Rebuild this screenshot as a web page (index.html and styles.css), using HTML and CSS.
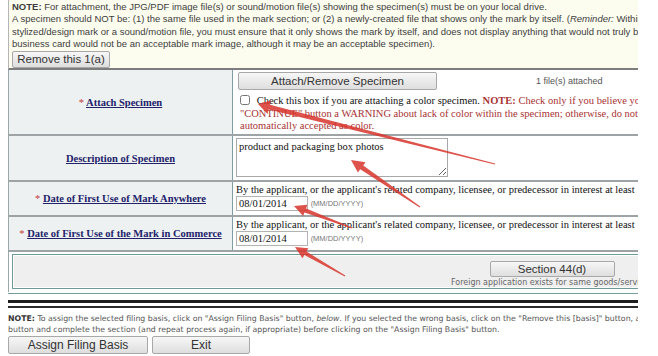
FILE: index.html
```html
<!DOCTYPE html>
<html lang="en">
<head>
    <meta charset="UTF-8">
    <title>Specimen - Filing Basis</title>
    <link rel="stylesheet" href="styles.css">
</head>
<body>
    <div class="frame">
        <div class="sheet">
            <div class="note">
                <p><b>NOTE:</b> For attachment, the JPG/PDF image file(s) or sound/motion file(s) showing the specimen(s) must be on your local drive.<br>
                A specimen should NOT be: (1) the same file used in the mark section; or (2) a newly-created file that shows only the mark by itself. (<i>Reminder:</i> Within the<br>
                stylized/design mark or a sound/motion file, you must ensure that it only shows the mark by itself, and does not display anything that would not truly be part of<br>
                business card would not be an acceptable mark image, although it may be an acceptable specimen).</p>
                <button class="btn btn-remove">Remove this 1(a)</button>
            </div>

            <table class="form">
                <tr class="row-attach">
                    <td class="label"><span class="req">*</span> <a href="#">Attach Specimen</a></td>
                    <td class="field">
                        <div class="attach-line">
                            <button class="btn btn-attach">Attach/Remove Specimen</button>
                            <span class="attached">1 file(s) attached</span>
                        </div>
                        <p class="color-check"><input type="checkbox"> Check this box if you are attaching a color specimen. <b class="warn">NOTE:</b> <span class="warn">Check only if you believe you<br>
                        "CONTINUE" button a WARNING about lack of color within the specimen; otherwise, do not<br>
                        automatically accepted as color.</span></p>
                    </td>
                </tr>
                <tr class="row-desc">
                    <td class="label"><a href="#">Description of Specimen</a></td>
                    <td class="field">
                        <textarea class="desc">product and packaging box photos</textarea>
                    </td>
                </tr>
                <tr class="row-date">
                    <td class="label"><span class="req">*</span> <a href="#">Date of First Use of Mark Anywhere</a></td>
                    <td class="field">
                        <p class="by">By the applicant, or the applicant's related company, licensee, or predecessor in interest at least</p>
                        <input class="date" type="text" value="08/01/2014"> <span class="fmt">(MM/DD/YYYY)</span>
                    </td>
                </tr>
                <tr class="row-date">
                    <td class="label"><span class="req">*</span> <a href="#">Date of First Use of the Mark in Commerce</a></td>
                    <td class="field">
                        <p class="by">By the applicant, or the applicant's related company, licensee, or predecessor in interest at least</p>
                        <input class="date" type="text" value="08/01/2014"> <span class="fmt">(MM/DD/YYYY)</span>
                    </td>
                </tr>
                <tr class="row-basis">
                    <td colspan="2">
                        <div class="basis">
                            <div class="basis-item">
                                <button class="btn btn-section">Section 44(d)</button>
                                <span class="basis-hint">Foreign application exists for same goods/services</span>
                            </div>
                        </div>
                    </td>
                </tr>
            </table>

            <div class="rule-thin"></div>
            <div class="rule-thick"></div>
            <div class="rule-dark"></div>

            <p class="foot-note"><b>NOTE:</b> To assign the selected filing basis, click on "Assign Filing Basis" button, <i>below</i>. If you selected the wrong basis, click on the "Remove this [basis]" button, after<br>
            button and complete the section (and repeat process again, if appropriate) before clicking on the "Assign Filing Basis" button.</p>

            <div class="actions">
                <button class="btn btn-assign">Assign Filing Basis</button>
                <button class="btn btn-exit">Exit</button>
            </div>
        </div>
    </div>

    <!-- red marker arrows drawn over the form -->
    <svg class="marks" width="658" height="356" viewBox="0 0 658 356">
        <g fill="#d8352c" opacity="0.85">
            <polygon points="258,104 271,100.5 270,104.8 495.1,163.5 494.9,164.5 268.6,109.6 267.6,114"/>
            <polygon points="351,160 365.5,162.3 363.2,165.6 420.3,206.5 419.7,207.5 360.2,169.3 357.9,172.5"/>
            <polygon points="294,206 307.4,204.8 306.1,208.4 352.2,227.4 351.8,228.6 304.5,212.4 303.1,216"/>
            <polygon points="295,247 308.4,248.2 306.4,251.5 345.3,275.5 344.7,276.5 304.4,255 302.4,258.3"/>
        </g>
    </svg>
</body>
</html>
```

FILE: styles.css
```css
body {
    margin: 0;
    background: #ffffff;
    font-family: "Liberation Serif", serif;
    font-size: 10.5px;
    color: #111;
}

.frame {
    width: 630px;
    margin-left: 8px;
    overflow: hidden;
}

.sheet {
    width: 760px;
}

/* top yellow note */
.note {
    background: #fcfcef;
    border-left: 1px solid #b5b5b5;
    border-bottom: 2px solid #7d7d7d;
    padding: 1px 4px 2px 3px;
    height: 65px;
    box-sizing: content-box;
    font-family: "Liberation Sans", sans-serif;
    color: #3d3d3d;
}

.note p {
    margin: 0;
    font-size: 9.5px;
    line-height: 12.3px;
    white-space: nowrap;
}

.btn {
    font-family: "Liberation Sans", sans-serif;
    font-size: 11.5px;
    color: #333;
    background: linear-gradient(#f7f7f7, #dedede);
    border: 1px solid #a8a8a8;
    border-radius: 2px;
    padding: 0;
    height: 17px;
    line-height: 15px;
}

.btn-remove {
    margin-top: 1px;
    width: 98px;
}

/* form table */
.form {
    border-collapse: collapse;
    width: 760px;
    border-left: 1px solid #9aa8aa;
}

.form td {
    padding: 0;
    vertical-align: top;
    border-bottom: 2px solid #9ea4a6;
}

.form td.label {
    width: 223px;
    background: #eef1f1;
    border-right: 1px solid #7f9ea3;
    text-align: center;
    vertical-align: middle;
    font-weight: bold;
}

.label a {
    color: #22226b;
}

.req {
    color: #c23b3b;
    font-weight: normal;
}

.field {
    padding-left: 3px !important;
}

.row-attach td {
    height: 64px;
}

.attach-line {
    display: flex;
    align-items: center;
    margin-top: 2px;
}

.btn-attach {
    width: 199px;
    height: 18px;
    margin-left: 2px;
}

.attached {
    margin-left: 99px;
    font-family: "Liberation Sans", sans-serif;
    font-size: 9px;
    color: #555;
}

.color-check {
    margin: 5px 0 0 4px;
    line-height: 12.5px;
    white-space: nowrap;
}

.color-check input {
    width: 10px;
    height: 10px;
    margin: 0 4px 0 0;
    vertical-align: -1px;
}

.warn {
    color: #a83232;
}

.row-desc td {
    height: 44px;
}

.desc {
    display: block;
    margin: 2px 0 0 0;
    width: 212px;
    height: 39px;
    box-sizing: border-box;
    border: 1px solid #a9a9a9;
    padding: 2px 2px;
    font-family: "Liberation Serif", serif;
    font-size: 10.5px;
    color: #111;
}

.row-date td {
    height: 33px;
}

.by {
    margin: 1px 0 0 0;
    line-height: 13px;
    white-space: nowrap;
}

.date {
    width: 72px;
    height: 15px;
    box-sizing: border-box;
    border: 1px solid #b3b3b3;
    padding: 0 2px;
    margin: 0;
    font-family: "Liberation Serif", serif;
    font-size: 10.5px;
    color: #111;
    vertical-align: middle;
}

.fmt {
    font-family: "Liberation Sans", sans-serif;
    font-size: 7.5px;
    color: #777;
}

.row-basis td {
    height: 38px;
    border-bottom: none;
    padding-top: 2px;
}

.basis {
    margin-left: 3px;
    height: 33px;
    background: #efefef;
    border: 1px solid #6f9a9c;
    box-shadow: inset 0 0 0 1px #ffffff;
}

.basis-item {
    width: 240px;
    margin-left: 419px;
    display: flex;
    flex-direction: column;
    align-items: center;
    padding-top: 6px;
}

.btn-section {
    width: 125px;
    height: 16px;
    font-size: 11.5px;
}

.basis-hint {
    font-family: "DejaVu Sans", sans-serif;
    font-size: 8px;
    color: #666;
    margin-top: 1px;
    white-space: nowrap;
}

.rule-thin {
    height: 1px;
    background: #7a9b9d;
    margin-top: 1px;
}

.rule-thick {
    height: 3px;
    background: #1e1e1e;
    margin-top: 6px;
}

.rule-dark {
    height: 2px;
    background: #2a2a2a;
    margin-top: 3px;
}

.foot-note {
    margin: 5px 0 0 0;
    font-family: "DejaVu Sans", sans-serif;
    font-size: 7.8px;
    line-height: 11px;
    color: #555;
    white-space: nowrap;
}

.foot-note b {
    color: #333;
}

.actions {
    display: flex;
    gap: 4px;
    margin-top: 1px;
}

.btn-assign {
    width: 140px;
    height: 18px;
    font-size: 12px;
}

.btn-exit {
    width: 98px;
    height: 18px;
    font-size: 12px;
}

.marks {
    position: absolute;
    top: 0;
    left: 0;
    pointer-events: none;
}
```
